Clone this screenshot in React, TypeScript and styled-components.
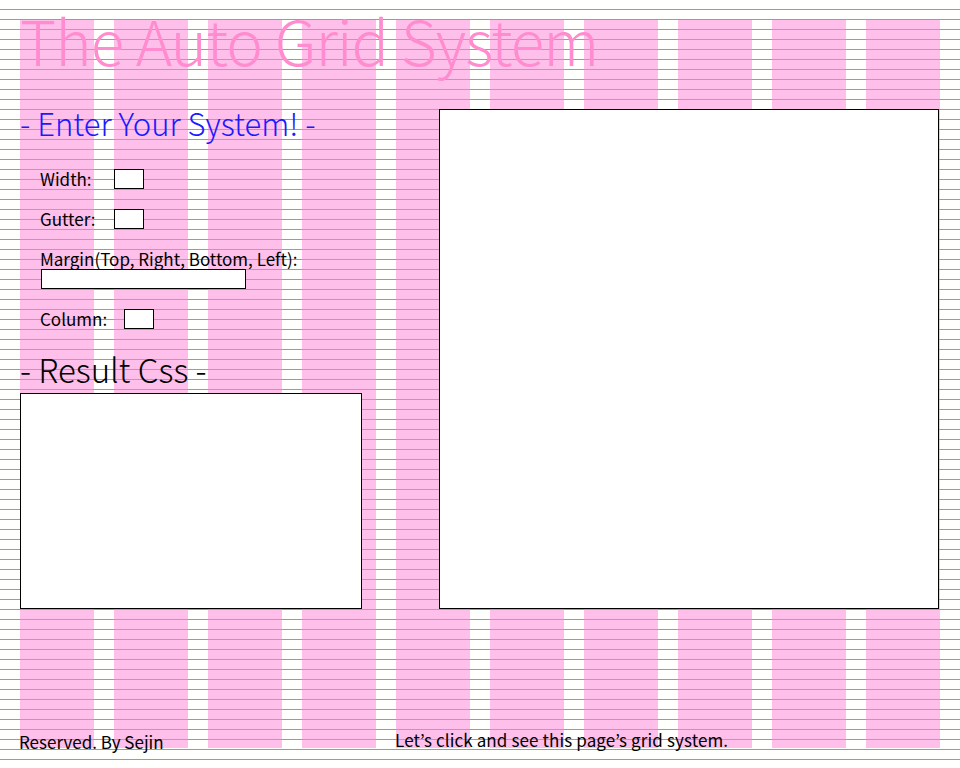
import React from 'react'
import styled, { createGlobalStyle } from 'styled-components'

const GlobalStyle = createGlobalStyle`
  html, body {
    margin: 0;
    padding: 0;
  }
  body {
    width: 960px;
    height: 768px;
    overflow: hidden;
    background-color: #fffffd;
    background-image: repeating-linear-gradient(
      to bottom,
      transparent 0,
      transparent 9px,
      #9c8ce6 9px,
      #9c8ce6 10px
    );
    font-family: "Noto Sans CJK JP", "Noto Sans", sans-serif;
    color: #000;
  }
`;

const Page = styled.div`
  position: relative;
  width: 960px;
  height: 768px;
`;

const GridOverlay = styled.div`
  position: absolute;
  top: 20px;
  left: 20px;
  width: 920px;
  height: 728px;
  display: grid;
  grid-template-columns: repeat(10, 74px);
  column-gap: 20px;
  pointer-events: none;
  z-index: 0;
`;

const Column = styled.div`
  background: rgba(255, 128, 218, 0.5);
`;

const Content = styled.div`
  position: relative;
  z-index: 1;
  height: 100%;
  box-sizing: border-box;
  padding: 0 20px;
  display: flex;
  flex-direction: column;
`;

const Title = styled.h1`
  margin: -6px 0 0;
  font-size: 62px;
  line-height: 90px;
  font-weight: 200;
  letter-spacing: -1px;
  color: #ff8ccf;
  white-space: nowrap;
`;

const Main = styled.div`
  display: flex;
  align-items: flex-start;
  margin-top: 19px;
`;

const Left = styled.div`
  width: 342px;
`;

const Heading = styled.h2<{ $color?: string; $size?: number }>`
  margin: 0;
  font-size: ${p => p.$size || 32}px;
  line-height: 40px;
  font-weight: 300;
  color: ${p => p.$color || '#000'};
  white-space: nowrap;
`;

const Form = styled.div`
  padding: 26px 0 0 20px;
  display: flex;
  flex-direction: column;
`;

const Row = styled.div`
  display: flex;
  align-items: center;
  height: 20px;
  margin-bottom: 20px;
  font-size: 17px;
`;

const Label = styled.label<{ $width?: number }>`
  display: inline-block;
  width: ${p => (p.$width ? `${p.$width}px` : 'auto')};
  line-height: 20px;
  white-space: nowrap;
`;

const Input = styled.input<{ $width?: number; $indent?: number }>`
  box-sizing: border-box;
  width: ${p => p.$width || 30}px;
  height: 20px;
  margin: 0 0 0 ${p => p.$indent || 0}px;
  padding: 0 2px;
  border: 1px solid #000;
  background: #fff;
  font: inherit;
  outline: none;
`;

const MarginBlock = styled.div`
  display: flex;
  flex-direction: column;
  margin-bottom: 20px;
  font-size: 17px;
`;

const ResultBox = styled.div`
  box-sizing: border-box;
  width: 342px;
  height: 216px;
  margin-top: 4px;
  background: #fff;
  border: 1px solid #000;
`;

const Preview = styled.div`
  box-sizing: border-box;
  width: 500px;
  height: 500px;
  margin-left: 77px;
  margin-top: 6px;
  background: #fff;
  border: 1px solid #000;
`;

const Footer = styled.footer`
  margin-top: auto;
  margin-bottom: 16px;
  display: grid;
  grid-template-columns: 376px 1fr;
  font-size: 17px;
  line-height: 20px;
`;

const Note = styled.span<{ $shift?: number; $spacing?: number }>`
  margin-left: -1px;
  transform: translateY(${p => p.$shift || 0}px);
  letter-spacing: ${p => p.$spacing || 0}px;
  white-space: nowrap;
`;

export default function App() {
  return (
    <Page>
      <GlobalStyle />
      <GridOverlay>
        {Array.from({ length: 10 }).map((_, i) => (
          <Column key={i} />
        ))}
      </GridOverlay>
      <Content>
        <Title>The Auto Grid System</Title>
        <Main>
          <Left>
            <Heading $color="#1a1aff" $size={31}>- Enter Your System! -</Heading>
            <Form>
              <Row>
                <Label $width={74}>Width:</Label>
                <Input />
              </Row>
              <Row>
                <Label $width={74}>Gutter:</Label>
                <Input />
              </Row>
              <MarginBlock>
                <Label>Margin(Top, Right, Bottom, Left):</Label>
                <Input $width={205} $indent={1} />
              </MarginBlock>
              <Row>
                <Label $width={84}>Column:</Label>
                <Input />
              </Row>
            </Form>
            <Heading $size={33}>- Result Css -</Heading>
            <ResultBox />
          </Left>
          <Preview />
        </Main>
        <Footer>
          <Note>Reserved. By Sejin</Note>
          <Note $shift={-2} $spacing={0.12}>Let’s click and see this page’s grid system.</Note>
        </Footer>
      </Content>
    </Page>
  )
}
